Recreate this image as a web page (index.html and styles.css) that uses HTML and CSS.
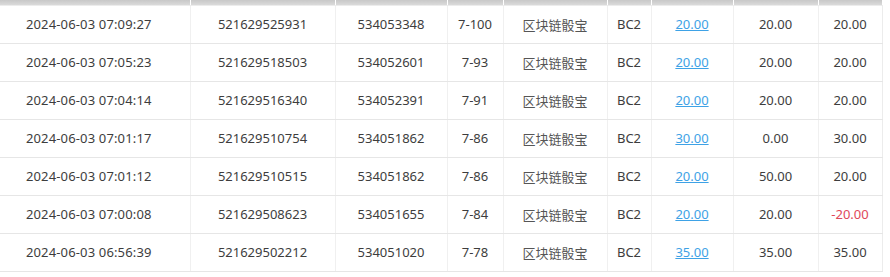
FILE: index.html
```html
<!DOCTYPE html>
<html lang="zh-CN">
<head>
  <meta charset="UTF-8" />
  <title>投注记录</title>
  <link rel="stylesheet" href="styles.css">
</head>
<body>
  <table class="records">
    <colgroup>
      <col class="c-time"><col class="c-order"><col class="c-issue"><col class="c-play">
      <col class="c-game"><col class="c-room"><col class="c-bet"><col class="c-valid"><col class="c-win">
    </colgroup>
    <thead>
      <tr><th></th><th></th><th></th><th></th><th></th><th></th><th></th><th></th><th></th></tr>
    </thead>
    <tbody>
      <tr><td class="time">2024-06-03 07:09:27</td><td>521629525931</td><td>534053348</td><td>7-100</td><td class="game">区块链骰宝</td><td>BC2</td><td><a href="#">20.00</a></td><td>20.00</td><td>20.00</td></tr>
      <tr><td class="time">2024-06-03 07:05:23</td><td>521629518503</td><td>534052601</td><td>7-93</td><td class="game">区块链骰宝</td><td>BC2</td><td><a href="#">20.00</a></td><td>20.00</td><td>20.00</td></tr>
      <tr><td class="time">2024-06-03 07:04:14</td><td>521629516340</td><td>534052391</td><td>7-91</td><td class="game">区块链骰宝</td><td>BC2</td><td><a href="#">20.00</a></td><td>20.00</td><td>20.00</td></tr>
      <tr><td class="time">2024-06-03 07:01:17</td><td>521629510754</td><td>534051862</td><td>7-86</td><td class="game">区块链骰宝</td><td>BC2</td><td><a href="#">30.00</a></td><td>0.00</td><td>30.00</td></tr>
      <tr><td class="time">2024-06-03 07:01:12</td><td>521629510515</td><td>534051862</td><td>7-86</td><td class="game">区块链骰宝</td><td>BC2</td><td><a href="#">20.00</a></td><td>50.00</td><td>20.00</td></tr>
      <tr><td class="time">2024-06-03 07:00:08</td><td>521629508623</td><td>534051655</td><td>7-84</td><td class="game">区块链骰宝</td><td>BC2</td><td><a href="#">20.00</a></td><td>20.00</td><td class="loss">-20.00</td></tr>
      <tr><td class="time">2024-06-03 06:56:39</td><td>521629502212</td><td>534051020</td><td>7-78</td><td class="game">区块链骰宝</td><td>BC2</td><td><a href="#">35.00</a></td><td>35.00</td><td>35.00</td></tr>
    </tbody>
  </table>
</body>
</html>
```

FILE: styles.css
```css
* {
  margin: 0;
  padding: 0;
  box-sizing: border-box;
}
body {
  background: #fff;
  font-family: "Noto Sans", "Noto Sans CJK SC", sans-serif;
  font-size: 13px;
  color: #3d3d3d;
}
.records {
  width: 882px;
  table-layout: fixed;
  border-collapse: collapse;
}
.c-time { width: 190px; }
.c-order { width: 145px; }
.c-issue { width: 112px; }
.c-play { width: 56px; }
.c-game { width: 104px; }
.c-room { width: 44px; }
.c-bet { width: 82px; }
.c-valid { width: 85px; }
.c-win { width: 64px; }
.records th {
  height: 5px;
  background: linear-gradient(#c8c8c8, #dadada);
  border-right: 1px solid #fff;
  border-bottom: 1px solid #ececec;
}
.records td {
  height: 38px;
  text-align: center;
  border-right: 1px solid #f0f0f0;
  border-bottom: 1px solid #e6e6e6;
  white-space: nowrap;
}
.records td:last-child {
  border-right: 1px solid #ececec;
}
.records td.time {
  padding-right: 12px;
  letter-spacing: 0.15px;
}
.records td.game {
  color: #555;
}
.records a {
  color: #3ea2e6;
  text-decoration: underline;
}
.records .loss {
  color: #e0485a;
}
```
